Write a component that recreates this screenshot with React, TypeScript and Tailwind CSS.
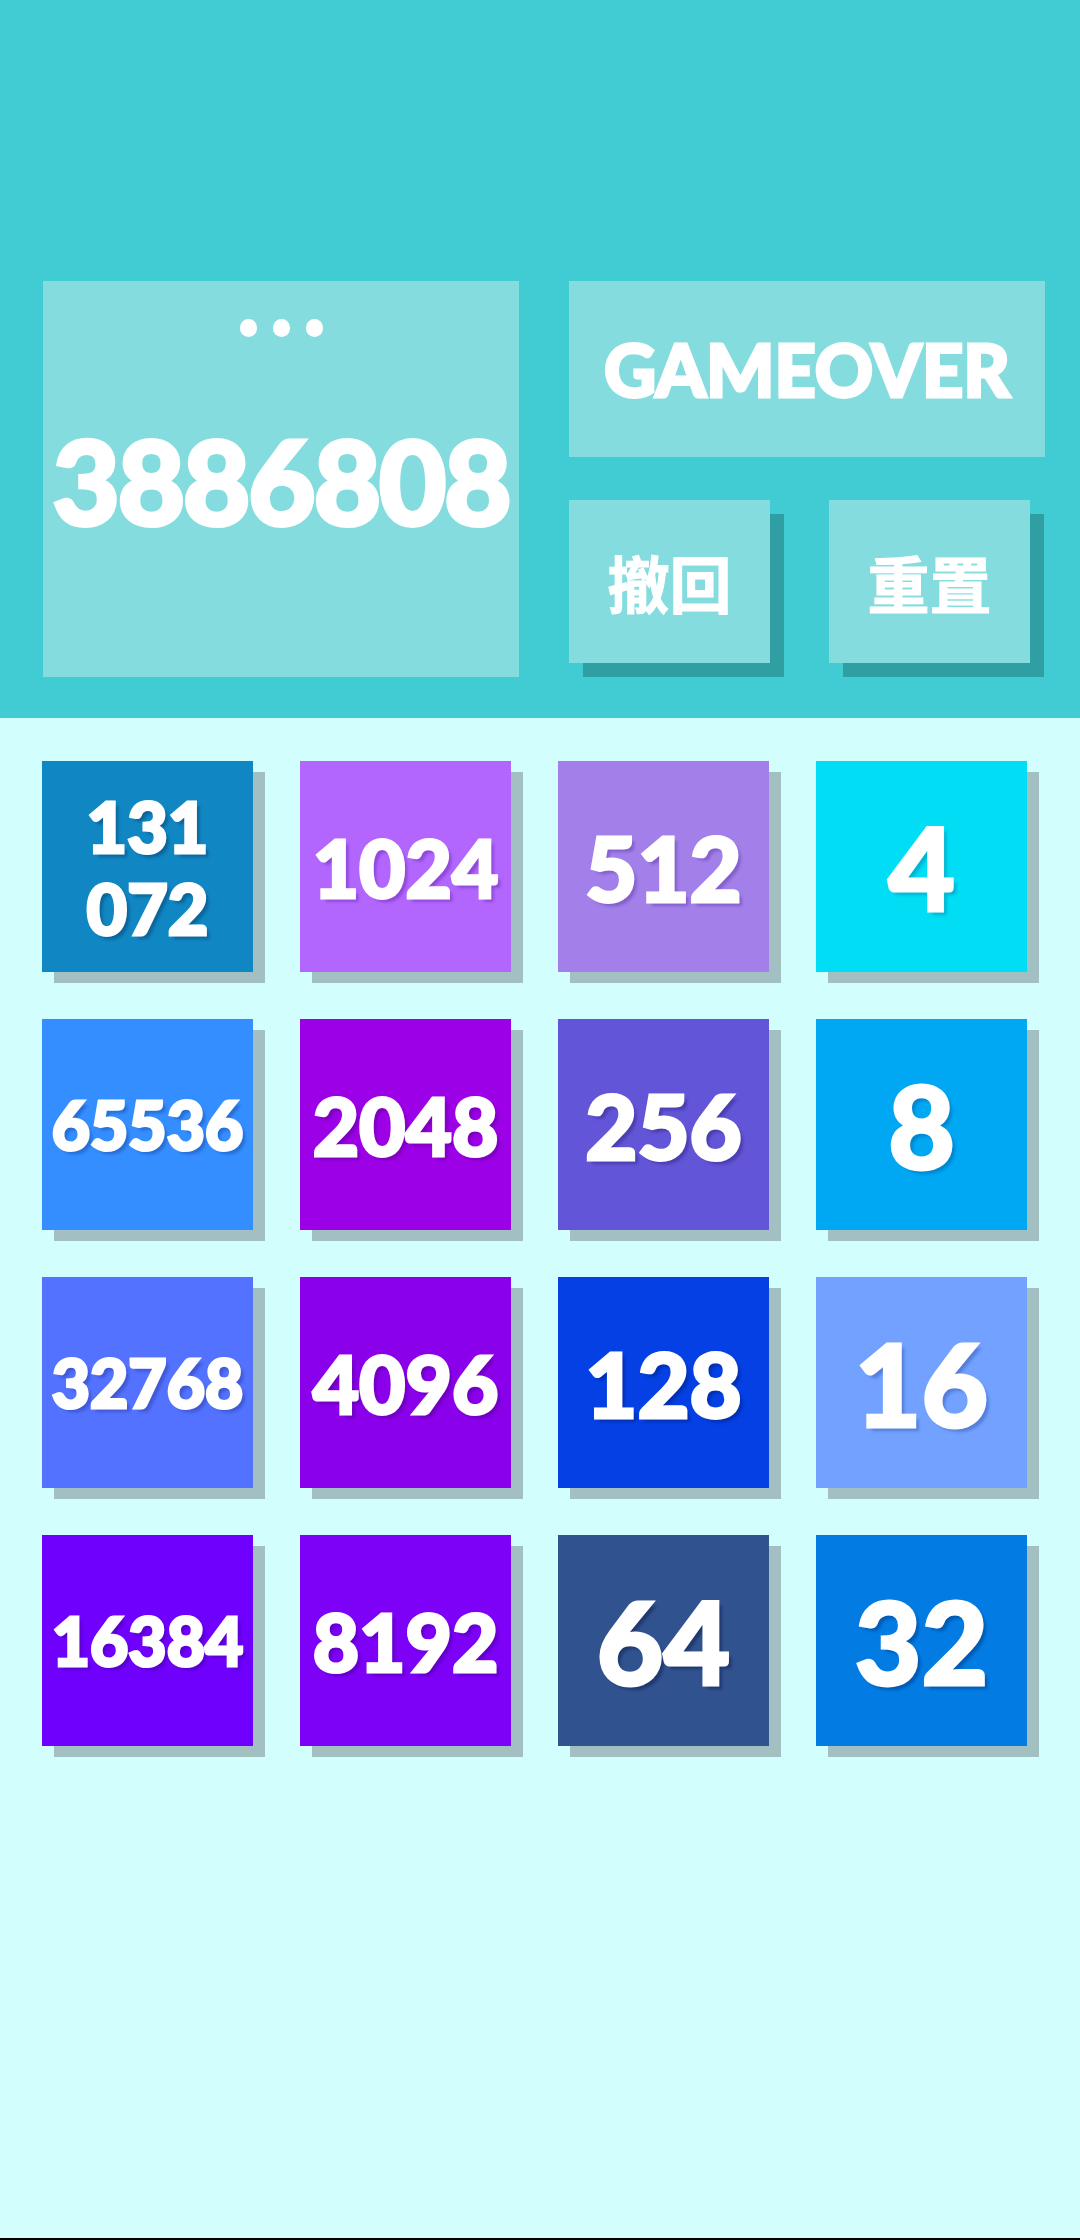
import React from 'react';

type Tile = { value: string; bg: string; shadow: string };

const tiles: Tile[] = [
  { value: '131072', bg: 'bg-[#1086c3]', shadow: '[text-shadow:4px_4px_3px_rgba(0,40,80,0.35)]' },
  { value: '1024', bg: 'bg-[#b266fe]', shadow: '[text-shadow:4px_4px_3px_rgba(70,0,140,0.3)]' },
  { value: '512', bg: 'bg-[#a380e9]', shadow: '[text-shadow:4px_4px_3px_rgba(60,20,140,0.3)]' },
  { value: '4', bg: 'bg-[#00ddf4]', shadow: '[text-shadow:4px_4px_3px_rgba(0,90,130,0.3)]' },
  { value: '65536', bg: 'bg-[#358eff]', shadow: '[text-shadow:4px_4px_3px_rgba(0,40,120,0.3)]' },
  { value: '2048', bg: 'bg-[#9b00e6]', shadow: '[text-shadow:4px_4px_3px_rgba(60,0,100,0.3)]' },
  { value: '256', bg: 'bg-[#6355d8]', shadow: '[text-shadow:4px_4px_3px_rgba(30,20,100,0.35)]' },
  { value: '8', bg: 'bg-[#00a7f3]', shadow: '[text-shadow:4px_4px_3px_rgba(0,60,120,0.3)]' },
  { value: '32768', bg: 'bg-[#5272ff]', shadow: '[text-shadow:4px_4px_3px_rgba(20,30,120,0.3)]' },
  { value: '4096', bg: 'bg-[#8a00ea]', shadow: '[text-shadow:4px_4px_3px_rgba(50,0,100,0.3)]' },
  { value: '128', bg: 'bg-[#0440e4]', shadow: '[text-shadow:4px_4px_3px_rgba(0,20,90,0.35)]' },
  { value: '16', bg: 'bg-[#72a1ff]', shadow: '[text-shadow:4px_4px_3px_rgba(30,60,150,0.35)]' },
  { value: '16384', bg: 'bg-[#7000fe]', shadow: '[text-shadow:4px_4px_3px_rgba(40,0,100,0.3)]' },
  { value: '8192', bg: 'bg-[#7d00f7]', shadow: '[text-shadow:4px_4px_3px_rgba(40,0,100,0.3)]' },
  { value: '64', bg: 'bg-[#30528f]', shadow: '[text-shadow:4px_4px_3px_rgba(0,10,50,0.35)]' },
  { value: '32', bg: 'bg-[#027be3]', shadow: '[text-shadow:4px_4px_3px_rgba(0,30,90,0.35)]' },
];

const sizeFor = (len: number) => {
  if (len <= 2) return 'text-[115px]';
  if (len === 3) return 'text-[90px]';
  if (len === 4) return 'text-[80px]';
  return 'text-[66px]';
};

const TileBox: React.FC<{ tile: Tile }> = ({ tile }) => {
  const long = tile.value.length > 5;
  return (
    <div
      className={`w-[211px] h-[211px] ${tile.bg} shadow-[12px_11px_0_#a2c0c1] flex items-center justify-center text-white font-black font-[Lato,sans-serif] [-webkit-text-stroke:3px_#fff] ${tile.shadow}`}
    >
      {long ? (
        <div className="text-[70px] leading-[82px] text-center">
          <div>{tile.value.slice(0, 3)}</div>
          <div>{tile.value.slice(3)}</div>
        </div>
      ) : (
        <span className={`${sizeFor(tile.value.length)} leading-none`}>{tile.value}</span>
      )}
    </div>
  );
};

const SmallButton: React.FC<{ label: string }> = ({ label }) => (
  <div className="w-[201px] h-[163px] bg-[#85dcdf] shadow-[14px_14px_0_#2f9fa4] flex items-center justify-center text-white text-[62px] font-bold leading-none font-['Noto_Sans_CJK_SC','Noto_Sans_CJK_TC',sans-serif] [-webkit-text-stroke:1px_#fff]">
    {label}
  </div>
);

export default function App() {
  return (
    <div className="w-[1080px] h-[2240px] bg-[#d2fffe] flex flex-col">
      {/* Top panel */}
      <header className="h-[718px] bg-[#41cbd3] pt-[281px] pl-[43px] flex gap-[50px]">
        <div className="w-[476px] h-[396px] bg-[#85dcdf] flex flex-col items-center pt-[38px]">
          <div className="flex gap-[16px]">
            <div className="w-[17px] h-[18px] rounded-full bg-white" />
            <div className="w-[17px] h-[18px] rounded-full bg-white" />
            <div className="w-[17px] h-[18px] rounded-full bg-white" />
          </div>
          <div className="mt-[86px] text-white font-black font-[Lato,sans-serif] text-[116px] leading-none tracking-[-2px] [-webkit-text-stroke:4px_#fff]">
            3886808
          </div>
        </div>
        <div className="w-[476px] flex flex-col gap-[43px]">
          <div className="h-[176px] bg-[#85dcdf] flex items-center justify-center text-white font-black font-[Lato,sans-serif] text-[72px] leading-none [-webkit-text-stroke:3px_#fff]">
            GAMEOVER
          </div>
          <div className="flex gap-[59px]">
            <SmallButton label="撤回" />
            <SmallButton label="重置" />
          </div>
        </div>
      </header>

      {/* Board */}
      <div className="pt-[43px] pl-[42px] grid grid-cols-[repeat(4,211px)] gap-[47px]">
        {tiles.map((t) => (
          <TileBox key={t.value} tile={t} />
        ))}
      </div>

      <div className="mt-auto h-[2px] bg-black" />
    </div>
  );
}
